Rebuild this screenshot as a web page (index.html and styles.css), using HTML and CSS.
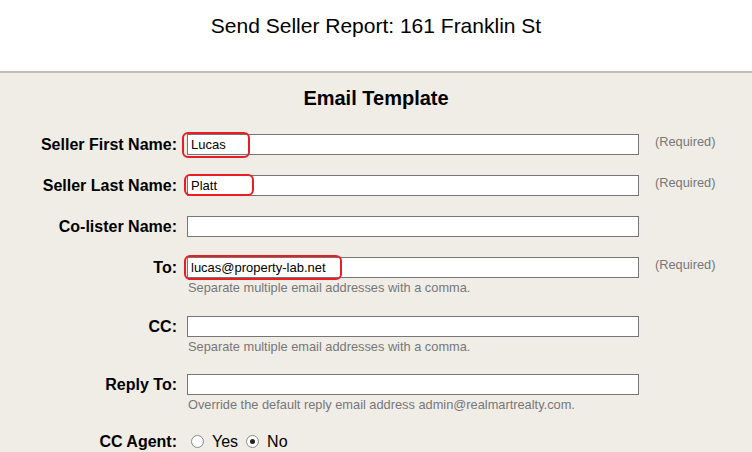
FILE: index.html
```html
<!DOCTYPE html>
<html lang="en">
<head>
<meta charset="utf-8">
<title>Send Seller Report</title>
<link rel="stylesheet" href="styles.css">
</head>
<body>
<header class="page-head">
  <h1 class="page-title">Send Seller Report: 161 Franklin St</h1>
</header>
<main class="panel">
  <h2 class="panel-title">Email Template</h2>
  <form class="form">
    <div class="row">
      <label class="label" for="first">Seller First Name:</label>
      <div class="control">
        <input class="text" id="first" type="text" value="Lucas">
        <span class="mark mark-first"></span>
      </div>
      <span class="req">(Required)</span>
    </div>
    <div class="row">
      <label class="label" for="last">Seller Last Name:</label>
      <div class="control">
        <input class="text" id="last" type="text" value="Platt">
        <span class="mark mark-last"></span>
      </div>
      <span class="req">(Required)</span>
    </div>
    <div class="row">
      <label class="label" for="co">Co-lister Name:</label>
      <div class="control">
        <input class="text" id="co" type="text" value="">
      </div>
    </div>
    <div class="row row-hint">
      <label class="label" for="to">To:</label>
      <div class="control">
        <input class="text" id="to" type="text" value="lucas@property-lab.net">
        <span class="mark mark-to"></span>
        <div class="hint">Separate multiple email addresses with a comma.</div>
      </div>
      <span class="req">(Required)</span>
    </div>
    <div class="row row-hint row-cc">
      <label class="label" for="cc">CC:</label>
      <div class="control">
        <input class="text" id="cc" type="text" value="">
        <div class="hint">Separate multiple email addresses with a comma.</div>
      </div>
    </div>
    <div class="row row-hint row-last-hint">
      <label class="label" for="reply">Reply To:</label>
      <div class="control">
        <input class="text" id="reply" type="text" value="">
        <div class="hint">Override the default reply email address admin@realmartrealty.com.</div>
      </div>
    </div>
    <div class="row">
      <span class="label">CC Agent:</span>
      <div class="control radios">
        <label class="radio-opt"><input class="radio" type="radio" name="ccagent" value="yes"> Yes</label>
        <label class="radio-opt"><input class="radio" type="radio" name="ccagent" value="no" checked> No</label>
      </div>
    </div>
  </form>
</main>
</body>
</html>
```

FILE: styles.css
```css
* { box-sizing: border-box; }
html, body { margin: 0; padding: 0; }
body {
  font-family: "Liberation Sans", Arial, sans-serif;
  color: #000;
  background: #f0ede7;
  width: 752px;
  height: 452px;
  overflow: hidden;
}
.page-head {
  background: #fff;
  height: 73px;
  border-bottom: 2px solid #c4c0b8;
  padding-top: 14px;
}
.page-title {
  margin: 0;
  font-size: 21px;
  font-weight: normal;
  text-align: center;
  line-height: 24px;
}
.panel {
  padding-top: 14px;
}
.panel-title {
  margin: 0 0 24px;
  font-size: 20px;
  font-weight: bold;
  text-align: center;
  line-height: 23px;
}
.form { display: flex; flex-direction: column; }
.row {
  display: grid;
  grid-template-columns: 177px 452px auto;
  column-gap: 10px;
  align-items: start;
  margin-bottom: 20px;
}
.row-hint { margin-bottom: 21px; }
.row-cc { margin-bottom: 20px; }
.row-last-hint { margin-bottom: 19px; }
.label {
  font-size: 16px;
  font-weight: bold;
  line-height: 21px;
  text-align: right;
}
.control { position: relative; }
.text {
  display: block;
  width: 452px;
  height: 21px;
  margin: 0;
  border: 1px solid #767676;
  background: #fff;
  padding: 0 3px;
  font-family: "Liberation Sans", Arial, sans-serif;
  font-size: 13px;
  color: #000;
  outline: none;
}
.hint {
  font-size: 12.8px;
  color: #777;
  line-height: 15px;
  margin-top: 2px;
  padding-left: 1px;
}
.req {
  font-size: 12.8px;
  color: #777;
  line-height: 15px;
  padding-left: 6px;
}
.mark {
  position: absolute;
  border: 2.5px solid #ec1c24;
  border-radius: 6px;
  pointer-events: none;
}
.mark-first { left: -5px; top: -2px; width: 68px; height: 26px; }
.mark-last { left: -3px; top: -1px; width: 70px; height: 22px; }
.mark-to { left: -3px; top: -2px; width: 158px; height: 25px; }
.radios {
  display: flex;
  align-items: center;
  height: 21px;
  padding-left: 4px;
  gap: 8px;
}
.radio-opt {
  display: flex;
  align-items: center;
  gap: 8px;
  font-size: 16px;
  line-height: 21px;
}
.radio {
  appearance: none;
  -webkit-appearance: none;
  width: 13px;
  height: 13px;
  margin: 0;
  border: 1px solid #8a8a8a;
  border-radius: 50%;
  background: #fff;
  display: grid;
  place-items: center;
}
.radio:checked::after {
  content: "";
  width: 5px;
  height: 5px;
  border-radius: 50%;
  background: #222;
}
```
